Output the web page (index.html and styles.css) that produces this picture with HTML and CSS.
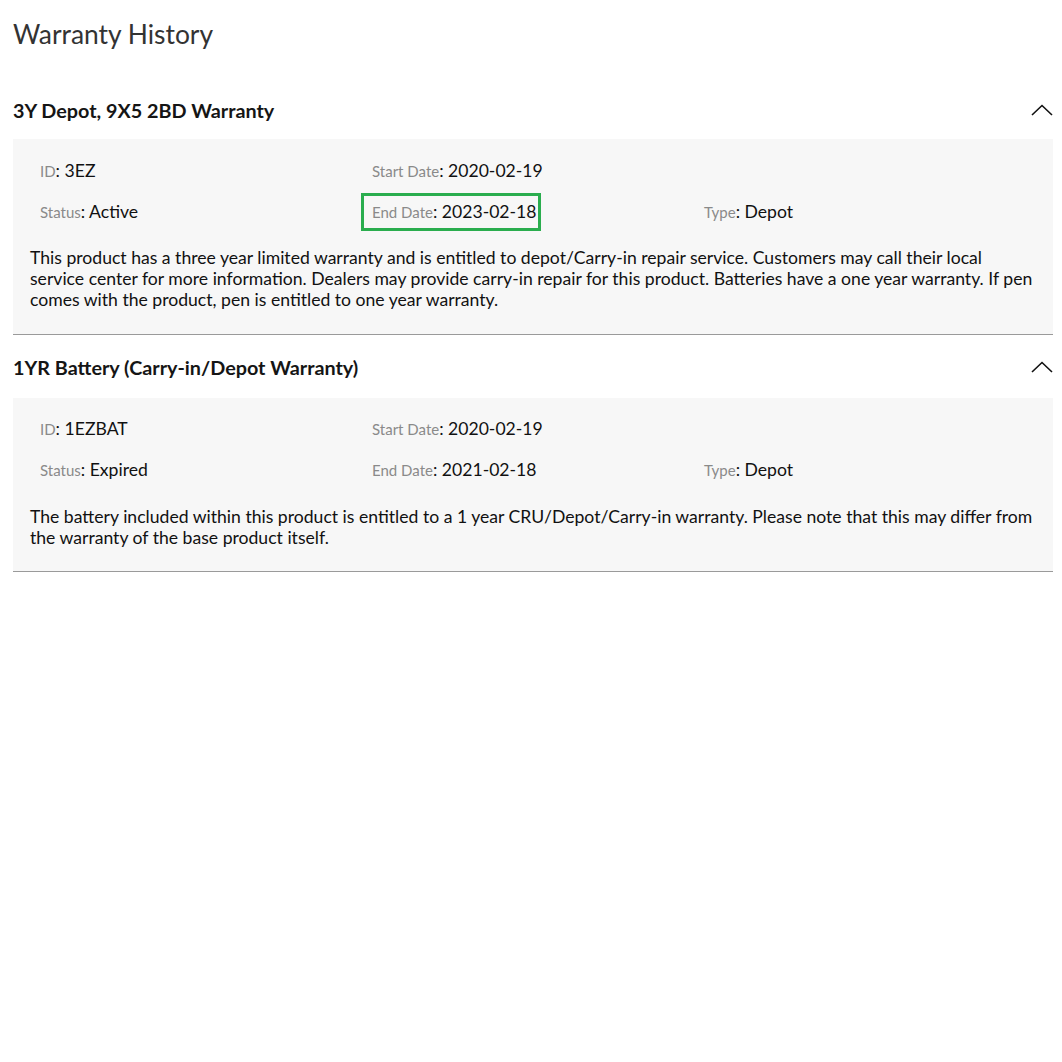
FILE: index.html
```html
<!DOCTYPE html>
<html>
<head>
<meta charset="utf-8">
<link rel="stylesheet" href="styles.css">
</head>
<body>
<div class="page">
  <h1 class="title">Warranty History</h1>

  <section class="warranty">
    <div class="warranty-head">
      <h2 class="warranty-name">3Y Depot, 9X5 2BD Warranty</h2>
      <svg class="chevron" width="22" height="12" viewBox="0 0 22 12"><path d="M1 11 L11 1.5 L21 11" fill="none" stroke="#111" stroke-width="1.6"/></svg>
    </div>
    <div class="warranty-body">
      <div class="fields">
        <div class="field"><span class="label">ID</span>: <span class="value">3EZ</span></div>
        <div class="field"><span class="label">Start Date</span>: <span class="value">2020-02-19</span></div>
        <div class="field"></div>
        <div class="field"><span class="label">Status</span>: <span class="value">Active</span></div>
        <div class="field"><span class="highlight"><span class="label">End Date</span>: <span class="value">2023-02-18</span></span></div>
        <div class="field"><span class="label">Type</span>: <span class="value">Depot</span></div>
      </div>
      <p class="desc">This product has a three year limited warranty and is entitled to depot/Carry-in repair service. Customers may call their local service center for more information. Dealers may provide carry-in repair for this product. Batteries have a one year warranty. If pen comes with the product, pen is entitled to one year warranty.</p>
    </div>
  </section>

  <section class="warranty">
    <div class="warranty-head">
      <h2 class="warranty-name">1YR Battery (Carry-in/Depot Warranty)</h2>
      <svg class="chevron" width="22" height="12" viewBox="0 0 22 12"><path d="M1 11 L11 1.5 L21 11" fill="none" stroke="#111" stroke-width="1.6"/></svg>
    </div>
    <div class="warranty-body">
      <div class="fields">
        <div class="field"><span class="label">ID</span>: <span class="value">1EZBAT</span></div>
        <div class="field"><span class="label">Start Date</span>: <span class="value">2020-02-19</span></div>
        <div class="field"></div>
        <div class="field"><span class="label">Status</span>: <span class="value">Expired</span></div>
        <div class="field"><span class="label">End Date</span>: <span class="value">2021-02-18</span></div>
        <div class="field"><span class="label">Type</span>: <span class="value">Depot</span></div>
      </div>
      <p class="desc">The battery included within this product is entitled to a 1 year CRU/Depot/Carry-in warranty. Please note that this may differ from the warranty of the base product itself.</p>
    </div>
  </section>
</div>
</body>
</html>
```

FILE: styles.css
```css
* { box-sizing: border-box; }
html, body { margin: 0; padding: 0; background: #fff; }
body { font-family: Lato, "Open Sans", sans-serif; color: #111; }

.page { padding: 0 9px 0 13px; }

.title {
  margin: 0;
  padding-top: 17px;
  font-size: 26.4px;
  font-weight: 400;
  color: #333;
  line-height: 34px;
}

.warranty-head {
  display: flex;
  align-items: center;
  justify-content: space-between;
  height: 58px;
  margin-top: 30px;
}
.warranty + .warranty .warranty-head { margin-top: 0; height: 63px; }

.warranty-name {
  margin: 0;
  font-size: 19.8px;
  font-weight: 700;
  color: #151515;
}

.warranty-body {
  background: #f7f7f7;
  border-bottom: 1px solid #9a9a9a;
  padding: 21px 16px 24px 17px;
}
.warranty + .warranty .warranty-body { padding-top: 20px; padding-bottom: 23px; }

.fields {
  display: grid;
  grid-template-columns: 332px 332px 1fr;
  row-gap: 19px;
  padding-left: 10px;
  margin-bottom: 24px;
}
.warranty + .warranty .fields { margin-bottom: 25px; }
.field { font-size: 17.6px; line-height: 22px; white-space: nowrap; }
.label { font-size: 15px; color: #8a8a8a; }
.value { color: #111; }

.highlight { position: relative; }
.highlight::after {
  content: "";
  position: absolute;
  left: -11px;
  top: -8px;
  right: -4px;
  bottom: -9px;
  border: 3px solid #2aad4e;
}

.desc {
  margin: 0;
  font-size: 17.6px;
  line-height: 21px;
  color: #111;
}
```
